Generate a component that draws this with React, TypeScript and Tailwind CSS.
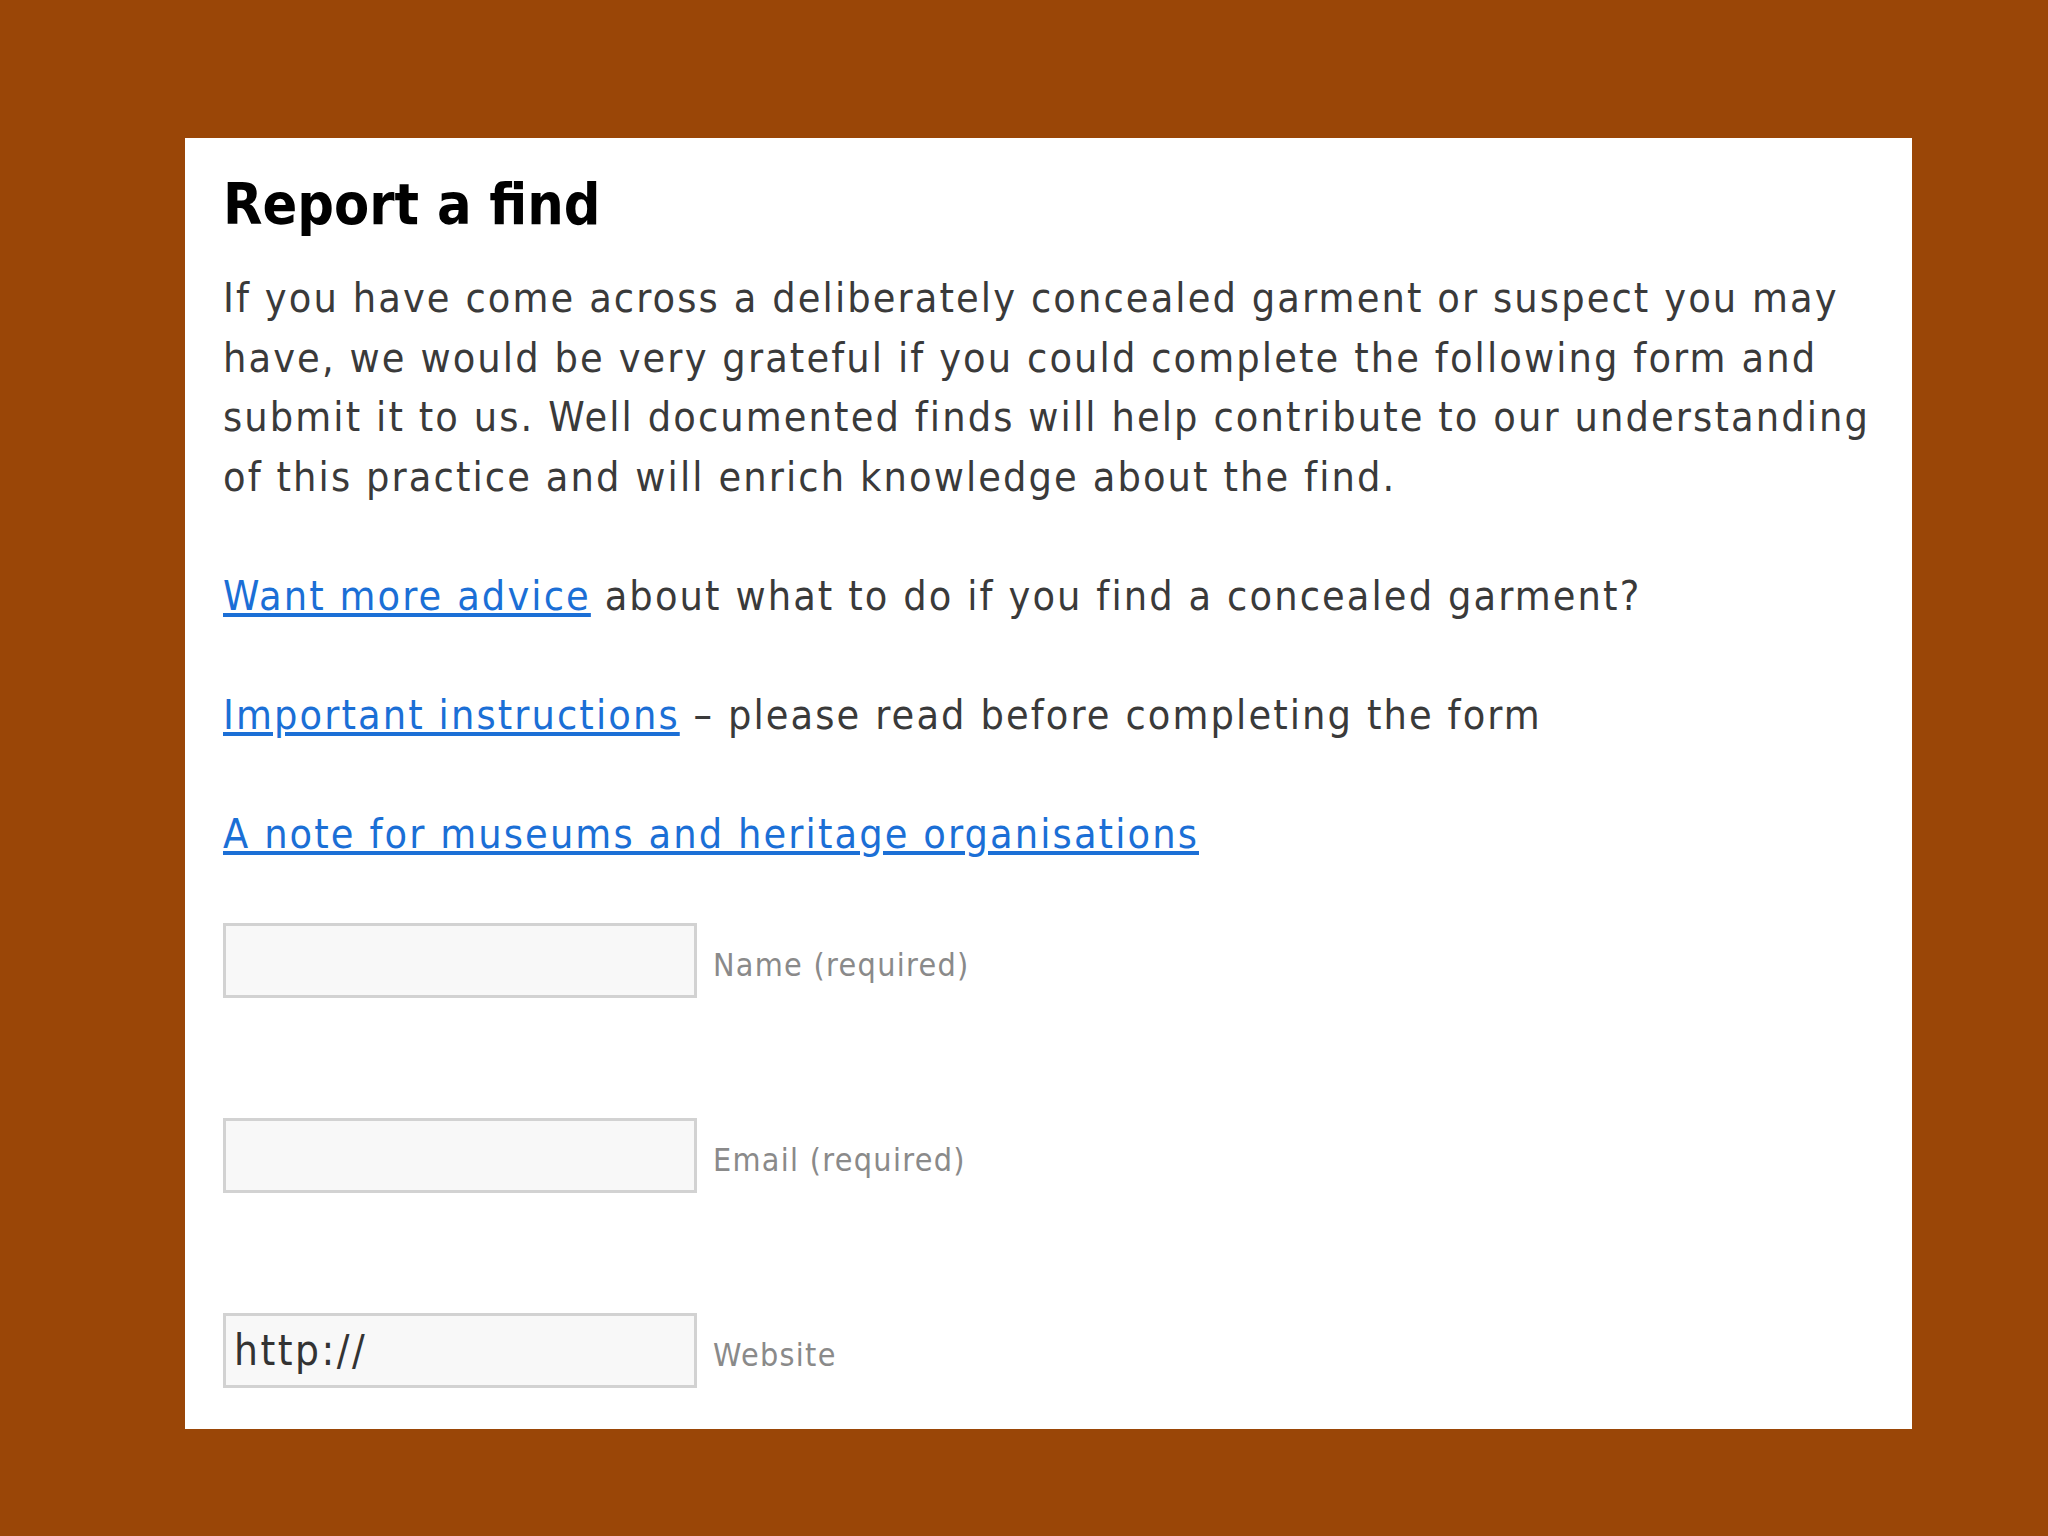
export default function App() {
  const body = { fontFamily: '"DejaVu Sans Condensed", "DejaVu Sans", sans-serif' };
  return (
    <div className="min-h-screen w-full bg-[#9a4607] pt-[138px] pb-[107px] pl-[185px] pr-[136px]" style={body}>
      <div className="h-[1291px] overflow-hidden bg-white pl-[38px] pr-[20px] pt-[30px]">
        <h1 className="text-[57px] font-bold leading-[72px] text-black">Report a find</h1>

        <p className="mt-[29px] text-[41px] leading-[59.5px] tracking-[2.1px] text-[#3a3a3a]">
          If you have come across a deliberately concealed garment or suspect you may
          <br />
          have, we would be very grateful if you could complete the following form and
          <br />
          submit it to us. Well documented finds will help contribute to our understanding
          <br />
          of this practice and will enrich knowledge about the find.
        </p>

        <p className="mt-[59.5px] text-[41px] leading-[59.5px] tracking-[2.1px] text-[#3a3a3a]">
          <a href="#" className="text-[#1b6fd6] underline">Want more advice</a> about what to do if you find a
          concealed garment?
        </p>

        <p className="mt-[59.5px] text-[41px] leading-[59.5px] tracking-[2.1px] text-[#3a3a3a]">
          <a href="#" className="text-[#1b6fd6] underline">Important instructions</a> – please read before
          completing the form
        </p>

        <p className="mt-[59.5px] text-[41px] leading-[59.5px] tracking-[2.1px]">
          <a href="#" className="text-[#1b6fd6] underline">A note for museums and heritage organisations</a>
        </p>

        <form className="mt-[59px] flex flex-col gap-[120px]">
          {[
            { label: 'Name (required)', value: '' },
            { label: 'Email (required)', value: '' },
            { label: 'Website', value: 'http://' },
          ].map((f) => (
            <div key={f.label} className="flex items-center gap-[16px]">
              <input
                type="text"
                defaultValue={f.value}
                className="h-[75px] w-[474px] border-[3px] border-[#d2d2d2] bg-[#f8f8f8] px-[8px] text-[42px] tracking-[2.5px] text-[#333] outline-none"
                style={body}
              />
              <label className="pt-[8px] text-[32px] tracking-[1.3px] text-[#8a8a8a]">{f.label}</label>
            </div>
          ))}
        </form>
      </div>
    </div>
  );
}
